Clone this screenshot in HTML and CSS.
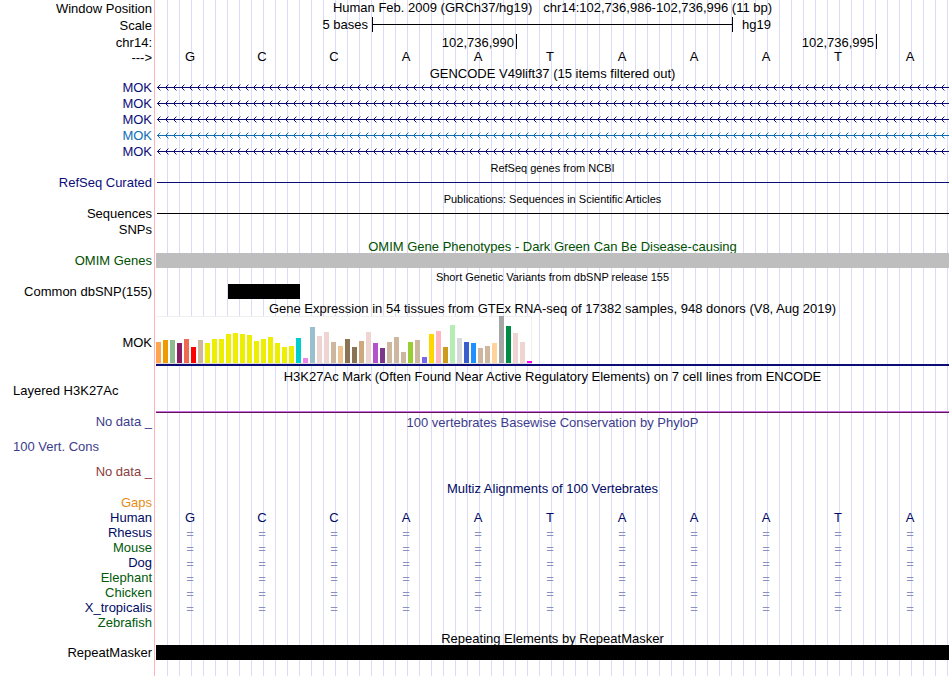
FILE: index.html
```html
<!DOCTYPE html>
<html lang="en">
<head>
<meta charset="utf-8">
<title>chr14:102,736,986-102,736,996 hg19</title>
<link rel="stylesheet" href="styles.css">
</head>
<body>
<svg class="defs" aria-hidden="true">
  <defs>
    <pattern id="minus" width="8" height="7" patternUnits="userSpaceOnUse" x="1">
      <path class="ink-navy" d="M0 3h8v1H0zM1 2h1v1H1zM1 4h1v1H1zM2 1h1v1H2zM2 5h1v1H2z"/>
      <path class="ink-navy faint" d="M3 0h1v1H3zM3 6h1v1H3z"/>
    </pattern>
    <pattern id="minus-alt" width="8" height="7" patternUnits="userSpaceOnUse" x="1">
      <path class="ink-blue" d="M0 3h8v1H0zM1 2h1v1H1zM1 4h1v1H1zM2 1h1v1H2zM2 5h1v1H2z"/>
      <path class="ink-blue faint" d="M3 0h1v1H3zM3 6h1v1H3z"/>
    </pattern>
  </defs>
</svg>
<main class="browser">
  <div class="row ruler"><div class="label">Window Position</div><div class="position">Human Feb. 2009 (GRCh37/hg19) &nbsp; chr14:102,736,986-102,736,996 (11 bp)</div></div>
  <div class="row ruler"><div class="label">Scale</div><div class="cells scale"><span class="scale-size">5 bases</span><span class="scale-bar"></span><span class="scale-db">hg19</span></div></div>
  <div class="row ruler"><div class="label">chr14:</div><div class="cells ticks"><span>102,736,990</span><span>102,736,995</span></div></div>
  <div class="row bases-row"><div class="label">---&gt;</div><div class="cells bases"><span>G</span><span>C</span><span>C</span><span>A</span><span>A</span><span>T</span><span>A</span><span>A</span><span>A</span><span>T</span><span>A</span></div></div>

  <div class="row short"><div class="title">GENCODE V49lift37 (15 items filtered out)</div></div>
  <div class="row navy"><div class="label">MOK</div><svg class="gene"><rect x="1" width="100%" height="7" fill="url(#minus)"/></svg></div>
  <div class="row navy"><div class="label">MOK</div><svg class="gene"><rect x="1" width="100%" height="7" fill="url(#minus)"/></svg></div>
  <div class="row navy"><div class="label">MOK</div><svg class="gene"><rect x="1" width="100%" height="7" fill="url(#minus)"/></svg></div>
  <div class="row blue"><div class="label">MOK</div><svg class="gene"><rect x="1" width="100%" height="7" fill="url(#minus-alt)"/></svg></div>
  <div class="row navy"><div class="label">MOK</div><svg class="gene"><rect x="1" width="100%" height="7" fill="url(#minus)"/></svg></div>

  <div class="row short"><div class="title small">RefSeq genes from NCBI</div></div>
  <div class="row navy"><div class="label">RefSeq Curated</div><div class="line"></div></div>
  <div class="row short"><div class="title small">Publications: Sequences in Scientific Articles</div></div>
  <div class="row"><div class="label">Sequences</div><div class="line"></div></div>
  <div class="row"><div class="label">SNPs</div></div>
  <div class="row short omim"><div class="title">OMIM Gene Phenotypes - Dark Green Can Be Disease-causing</div></div>
  <div class="row short omim"><div class="label">OMIM Genes</div><div class="block grey"></div></div>
  <div class="row"><div class="title small">Short Genetic Variants from dbSNP release 155</div></div>
  <div class="row short"><div class="label">Common dbSNP(155)</div><div class="cells"><div class="block snp"></div></div></div>

  <div class="row ruler"><div class="title">Gene Expression in 54 tissues from GTEx RNA-seq of 17382 samples, 948 donors (V8, Aug 2019)</div></div>
  <div class="row expression"><div class="label">MOK</div>
    <div class="gtex">
      <div class="bars">
        <i style="height:21px;background:#ffa54f"></i><i style="height:23px;background:#ee9a00"></i><i style="height:23px;background:#8fbc8f"></i><i style="height:20px;background:#8b1c62"></i><i style="height:24px;background:#ee6a50"></i><i style="height:16px;background:#ff0000"></i><i style="height:23px;background:#cdb79e"></i>
        <i style="height:20px;background:#eeee00"></i><i style="height:24px;background:#eeee00"></i><i style="height:24px;background:#eeee00"></i><i style="height:29px;background:#eeee00"></i><i style="height:30px;background:#eeee00"></i><i style="height:29px;background:#eeee00"></i><i style="height:28px;background:#eeee00"></i><i style="height:22px;background:#eeee00"></i><i style="height:24px;background:#eeee00"></i><i style="height:26px;background:#eeee00"></i><i style="height:20px;background:#eeee00"></i><i style="height:16px;background:#eeee00"></i><i style="height:17px;background:#eeee00"></i>
        <i style="height:25px;background:#00cdcd"></i><i style="height:5px;background:#ee82ee"></i><i style="height:36px;background:#9ac0cd"></i><i style="height:27px;background:#eed5d2"></i><i style="height:31px;background:#eed5d2"></i><i style="height:21px;background:#cdb79e"></i><i style="height:17px;background:#eec591"></i><i style="height:24px;background:#8b7355"></i><i style="height:16px;background:#8b7355"></i><i style="height:22px;background:#cdaa7d"></i><i style="height:31px;background:#eed5d2"></i>
        <i style="height:20px;background:#b452cd"></i><i style="height:15px;background:#7a378b"></i><i style="height:21px;background:#cdb79e"></i><i style="height:26px;background:#cdb79e"></i><i style="height:11px;background:#cdb79e"></i><i style="height:21px;background:#9acd32"></i><i style="height:23px;background:#cdb79e"></i><i style="height:6px;background:#7a67ee"></i><i style="height:29px;background:#ffd700"></i><i style="height:32px;background:#ffb6c1"></i><i style="height:16px;background:#cd9b1d"></i><i style="height:38px;background:#b4eeb4"></i><i style="height:25px;background:#d9d9d9"></i>
        <i style="height:21px;background:#3a5fcd"></i><i style="height:20px;background:#1e90ff"></i><i style="height:15px;background:#cdb79e"></i><i style="height:17px;background:#cdb79e"></i><i style="height:20px;background:#ffd39b"></i><i style="height:47px;background:#a6a6a6"></i><i style="height:37px;background:#008b45"></i><i style="height:30px;background:#eed5d2"></i><i style="height:21px;background:#eed5d2"></i><i style="height:2px;background:#ff00ff"></i>
      </div>
    </div>
  </div>

  <div class="row"><div class="title">H3K27Ac Mark (Often Found Near Active Regulatory Elements) on 7 cell lines from ENCODE</div></div>
  <div class="row layered"><div class="label start">Layered H3K27Ac</div><div class="signal"></div></div>
  <div class="row phylop"><div class="label">No data _</div><div class="title">100 vertebrates Basewise Conservation by PhyloP</div></div>
  <div class="row phylop cons"><div class="label start">100 Vert. Cons</div></div>
  <div class="row ruler negative"><div class="label">No data _</div></div>

  <div class="row short ink"><div class="title">Multiz Alignments of 100 Vertebrates</div></div>
  <div class="row short gaps"><div class="label">Gaps</div></div>
  <div class="row short ink"><div class="label">Human</div><div class="cells bases"><span>G</span><span>C</span><span>C</span><span>A</span><span>A</span><span>T</span><span>A</span><span>A</span><span>A</span><span>T</span><span>A</span></div></div>
  <div class="row short ink"><div class="label">Rhesus</div><div class="cells bases same"><span>=</span><span>=</span><span>=</span><span>=</span><span>=</span><span>=</span><span>=</span><span>=</span><span>=</span><span>=</span><span>=</span></div></div>
  <div class="row short green"><div class="label">Mouse</div><div class="cells bases same"><span>=</span><span>=</span><span>=</span><span>=</span><span>=</span><span>=</span><span>=</span><span>=</span><span>=</span><span>=</span><span>=</span></div></div>
  <div class="row short ink"><div class="label">Dog</div><div class="cells bases same"><span>=</span><span>=</span><span>=</span><span>=</span><span>=</span><span>=</span><span>=</span><span>=</span><span>=</span><span>=</span><span>=</span></div></div>
  <div class="row short green"><div class="label">Elephant</div><div class="cells bases same"><span>=</span><span>=</span><span>=</span><span>=</span><span>=</span><span>=</span><span>=</span><span>=</span><span>=</span><span>=</span><span>=</span></div></div>
  <div class="row short green"><div class="label">Chicken</div><div class="cells bases same"><span>=</span><span>=</span><span>=</span><span>=</span><span>=</span><span>=</span><span>=</span><span>=</span><span>=</span><span>=</span><span>=</span></div></div>
  <div class="row short ink"><div class="label">X_tropicalis</div><div class="cells bases same"><span>=</span><span>=</span><span>=</span><span>=</span><span>=</span><span>=</span><span>=</span><span>=</span><span>=</span><span>=</span><span>=</span></div></div>
  <div class="row short green"><div class="label">Zebrafish</div></div>
  <div class="row short"><div class="title">Repeating Elements by RepeatMasker</div></div>
  <div class="row short"><div class="label">RepeatMasker</div><div class="block"></div></div>
</main>
</body>
</html>
```
FILE: styles.css
```css
* { box-sizing: border-box; }

body {
  margin: 0;
  padding-right: 1px;
  background: #fff;
  color: #000;
  font: 13px/16px "Liberation Sans", Arial, sans-serif;
}

.defs { position: absolute; width: 0; height: 0; }
.ink-navy { fill: #0c0c78; }
.ink-blue { fill: #0e6eb4; }
.faint { fill-opacity: 0.4; }

/* Pink divider after the labels, then a guide line every 12px */
.browser {
  min-height: 100vh;
  padding-bottom: 16px;
  background:
    linear-gradient(to right, #fff 154px, #ffb4b4 154px, #ffb4b4 155px, #fff 155px, #fff 156px, transparent 156px),
    linear-gradient(to right, #dcdcf8 1px, transparent 1px) 11px 0 / 12px 100%;
}

.row {
  display: grid;
  grid-template-columns: 156px minmax(0, 1fr);
  height: 16px;
  white-space: nowrap;
}
.row.short { height: 15px; line-height: 15px; }
.row.ruler { height: 17px; line-height: 17px; }
.row.bases-row { height: 14px; line-height: 14px; }

.label { grid-column: 1; padding-right: 4px; text-align: right; }
.label.start { padding-left: 13px; text-align: left; }
.position { text-align: center; line-height: 15px; }
.title { grid-column: 2; padding-top: 1px; text-align: center; }
.title.small { font-size: 11px; }

.navy { color: #0c0c78; }
.blue { color: #0e6eb4; }
.omim { color: #005000; }
.phylop { color: #3c3c8c; }
.negative { color: #8c3c3c; }
.gaps { color: #e68c14; }
.ink { color: #000a64; }
.green { color: #005a0a; }

/* Eleven equal columns, one per base */
.cells {
  display: grid;
  grid-template-columns: repeat(11, minmax(0, 1fr));
  padding-right: 1px;
}
.bases span { padding-right: 4px; text-align: center; }
.bases-row .bases { line-height: 12px; }
.bases.same { color: #8a8fc0; line-height: 17px; }

.scale-size { grid-column: 1 / 4; padding-right: 4px; text-align: right; line-height: 15px; }
.scale-bar {
  grid-column: 4 / 9;
  height: 15px;
  margin-right: -1px;
  border: solid #000;
  border-width: 0 1px;
  background: linear-gradient(#000, #000) 0 7px / 100% 1px no-repeat;
}
.scale-db { grid-column: 9 / 12; padding-left: 10px; line-height: 15px; }

.ticks span {
  height: 15px;
  margin-right: -1px;
  padding-right: 2px;
  border-right: 1px solid #000;
  text-align: right;
}
.ticks span:first-child { grid-column: 1 / 6; }
.ticks span:last-child { grid-column: 6 / 11; }

.gene { width: 100%; height: 7px; margin-top: 4px; }
.line { height: 1px; margin: 7px 0 0 1px; background: currentColor; }
.block { height: 15px; background: #000; }
.block.grey { background: #bebebe; }
.block.snp { grid-column: 2; }

.row.expression { height: 52px; line-height: 54px; }
.gtex { height: 50px; border-bottom: 2px solid #0c0c78; }
.bars {
  display: flex;
  align-items: flex-end;
  gap: 2px;
  width: max-content;
  height: 48px;
  background: #fff;
  border-bottom: 1px solid #dcdcdc;
  box-shadow: inset -1px 1px #f0f0f0;
}
.bars i { width: 5px; }

.row.layered { height: 30px; line-height: 14px; }
.signal { height: 2px; margin-top: 27px; background: #641450; border-top: 1px solid #c86ee6; }
.row.cons { height: 33px; line-height: 33px; }
```
